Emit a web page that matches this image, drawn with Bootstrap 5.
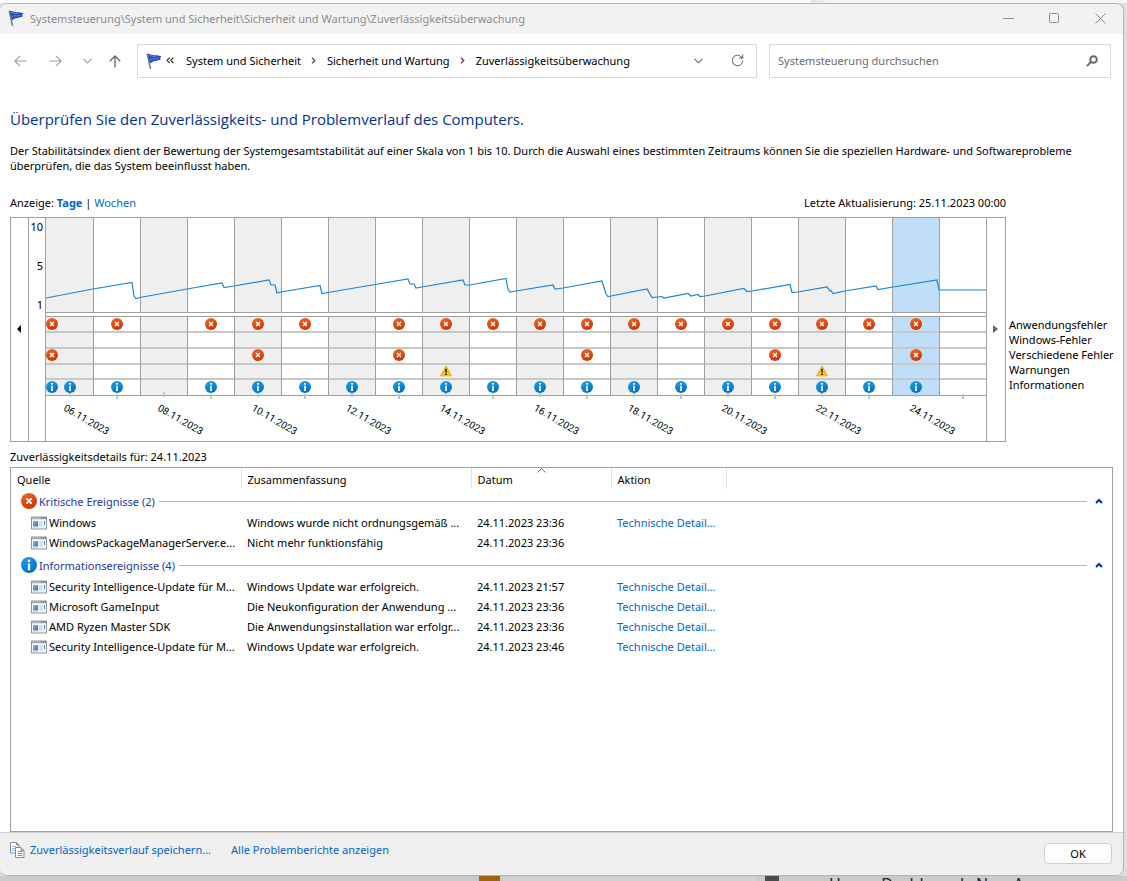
<!DOCTYPE html>
<html lang="de">
<head>
<meta charset="utf-8">
<meta name="viewport" content="width=device-width, initial-scale=1">
<title>Zuverlässigkeitsüberwachung</title>
<link href="https://cdn.jsdelivr.net/npm/bootstrap@5.3.0/dist/css/bootstrap.min.css" rel="stylesheet">
<style>
body { font-family: "Noto Sans", "Open Sans", sans-serif; font-size: 11px; line-height: 15px; color: #000; background: #dedede; }
a { color: #0066cc; text-decoration: none; }
.desk-top { height: 3px; background: linear-gradient(90deg, #fafafa 72%, #e4e4e4 72%, #f6f6f6 74%); }
.desk-bottom { height: 5px; background: #cacaca; }
.desk-bottom .thumb { width: 21px; background: #a0620c; margin-left: 479px; }
.desk-bottom .sheet { width: 254px; background: #d0d0d0; margin-left: 3px; }
.desk-bottom .pic { width: 14px; background: #4d4a42; margin-left: 8px; }
.desk-bottom .under { font-size: 16px; line-height: 16px; color: #222; margin-left: 50px; }
.win { margin-right: 3px; background: #fff; border: 1px solid #b4b4b4; border-left: 0; border-radius: 8px; }
.titlebar { height: 30px; background: #f2f2f2; color: #8c8c8c; padding: 0 0 2px 8px; }
.cap-btn { width: 46px; color: #8c8c8c; }
.plain-btn { border: 0; background: none; padding: 0; display: flex; align-items: center; justify-content: center; }
.toolbar { padding: 10px 12px 0 10px; }
.nav-btn { width: 20px; height: 34px; color: #a0a0a0; }
.nav-group { width: 127px; padding-right: 12px; }
.field { height: 34px; border: 1px solid #d9d9d9; padding-bottom: 1px; }
.address { flex: 618 1 0; }
.address ol { margin-left: 8px; }
.crumb-sep { padding: 0 11px 0 10px; }
.search { flex: 324 1 0; margin-left: 12px; color: #6d6d6d; }
.search input { border: 0; outline: 0; padding: 0; color: #6d6d6d; }
.search input::placeholder { color: #6d6d6d; opacity: 1; }
.content { padding: 31px 10px 0; }
h1 { font-family: "Open Sans", "Noto Sans", sans-serif; font-size: 15px; line-height: 20px; color: #003399; margin: 0 0 14px; font-weight: 400; }
.intro { margin: 0 0 22px; }
.chart { border: 1px solid #a0a0a0; }
.scroll-btn { width: 18px; padding: 0 2px 2px 0; }
.scroll-prev { border-right: 1px solid #a0a0a0; }
.scroll-next { border-left: 1px solid #a0a0a0; width: 19px; color: #666; }
.topline { margin-right: 107px; margin-bottom: 7px; }
.legend-col { width: 107px; padding: 100px 0 0 3px; }
.chart svg { min-width: 0; }
.chart text { font-size: 11px; }
.chart .day { font-family: Roboto, sans-serif; font-size: 10px; }
.details-title { padding-top: 7px; }
.details { border: 1px solid #a0a0a0; margin-top: 3px; }
.events { width: 100%; table-layout: fixed; white-space: nowrap; }
.events th { font-weight: 400; height: 21px; padding: 2px 6px 1px; border-right: 1px solid #e2e2e2; position: relative; }
.events th:last-child { border: 0; }
.events td { height: 20px; padding: 0 6px 1px; }
.events td:first-child { padding: 0 0 1px 20px; }
.events .group td { height: 24px; padding: 0 5px 0 10px; color: #1a3a9f; }
.events svg { display: block; flex: none; }
.cell-text { padding-left: 2px; }
.rule { height: 1px; background: #a9b7d6; }
.sort { position: absolute; top: 0; left: 50%; margin-left: -4px; }
.foot { height: 43px; background: #efefef; border-top: 1px solid #cfcfcf; border-radius: 0 0 8px 8px; padding: 0 11px 0 10px; }
.foot-links { padding-bottom: 9px; }
.foot-links svg { margin-right: 5px; }
.ok-btn { width: 68px; height: 21px; background: #fdfdfd; border: 1px solid #d0d0d0; border-radius: 4px; padding: 0; font-size: 11px; line-height: 15px; margin-bottom: 2px; }
</style>
</head>
<body class="d-flex flex-column min-vh-100">
<svg width="0" height="0" class="position-absolute" aria-hidden="true">
  <defs>
    <linearGradient id="gr" x1="0" y1="0" x2="0.4" y2="1"><stop offset="0" stop-color="#f0692e"/><stop offset="1" stop-color="#d23600"/></linearGradient>
    <linearGradient id="gb" x1="0" y1="0" x2="0.4" y2="1"><stop offset="0" stop-color="#23a0e6"/><stop offset="1" stop-color="#0074cc"/></linearGradient>
    <linearGradient id="gt" x1="0" y1="0" x2="1" y2="1"><stop offset="0" stop-color="#8ac0e4"/><stop offset="1" stop-color="#2d6fc0"/></linearGradient>
    <symbol id="err" viewBox="0 0 16 16"><circle cx="8" cy="8" r="8" fill="url(#gr)"/><path d="M5.4 5.4l5.2 5.2M10.6 5.4l-5.2 5.2" stroke="#fff" stroke-width="1.9"/></symbol>
    <symbol id="inf" viewBox="0 0 16 16"><circle cx="8" cy="8" r="8" fill="url(#gb)"/><path d="M8 2.8v2.2M8 6.4v6.8" stroke="#fff" stroke-width="2.3"/></symbol>
    <symbol id="warn" viewBox="0 0 16 16"><path d="M8 1.2L15.3 14.4H.7z" fill="#fcc40f" stroke="#e3a600" stroke-width="1" stroke-linejoin="round"/><path d="M8 5v5M8 11.2v2" stroke="#222" stroke-width="2.1"/></symbol>
    <symbol id="flag" viewBox="0 0 16 16"><path d="M1.3 1.2L4.4 15.2" stroke="#6f7f8e" stroke-width="1.6" stroke-linecap="round"/><path d="M1.8 1.4C4.5 0 6 2.8 9.2 2.2 11.3 1.9 13 2.6 15.6 3.4 14.2 4.4 14 5.6 14.6 6.8 12.6 6.6 11.6 8.2 9.4 8 7.2 7.8 6 9 4 10.4z" fill="#2848bd"/><path d="M3.2 2.6C6 2 7 4.2 10 3.6M4 6.6C7 4.8 9 7 12.6 5" stroke="#6d8ae6" stroke-width="1" fill="none"/></symbol>
    <symbol id="app" viewBox="0 0 16 14"><path d="M.5 1h15v12H.5z" fill="#f8f9fa" stroke="#8d949c"/><path d="M1 1h14v2.2H1z" fill="#a5acb4"/><path d="M10 2h1M12 2h1M14 2h1" stroke="#4d545c"/><path d="M2 5h5v5.5H2z" fill="url(#gt)"/><path d="M8 6h4M8 8h4M8 10h4M2 11.7h2M5 11.7h2" stroke="#c3c9cf"/><path d="M13.5 5v4" stroke="#4a86cc"/></symbol>
    <symbol id="up" viewBox="0 0 8 6"><path d="M1 5l3-3 3 3" fill="none" stroke="#003399" stroke-width="2"/></symbol>
  </defs>
</svg>

<div class="desk-top"></div>
<main class="win d-flex flex-column flex-grow-1 overflow-hidden">
  <header class="titlebar d-flex align-items-stretch">
    <div class="d-flex align-items-center flex-grow-1">
      <svg width="16" height="16" class="me-1"><use href="#flag"/></svg>
      <span class="cell-text">Systemsteuerung\System und Sicherheit\Sicherheit und Wartung\Zuverlässigkeitsüberwachung</span>
    </div>
    <button class="plain-btn cap-btn" aria-label="Minimieren"><svg width="11" height="11"><path d="M0 5.5h11" stroke="currentColor"/></svg></button>
    <button class="plain-btn cap-btn" aria-label="Maximieren"><svg width="11" height="11"><rect x=".5" y=".5" width="9" height="9" rx="1" fill="none" stroke="currentColor"/></svg></button>
    <button class="plain-btn cap-btn" aria-label="Schließen"><svg width="11" height="11"><path d="M.5 .5l10 10M10.5 .5l-10 10" stroke="currentColor"/></svg></button>
  </header>

  <nav class="toolbar d-flex">
    <div class="nav-group d-flex justify-content-between flex-shrink-0">
      <button class="plain-btn nav-btn" aria-label="Zurück"><svg width="13" height="12" fill="none" stroke="currentColor" stroke-width="1.2"><path d="M.8 6H12.5M6 .8L.8 6 6 11.2"/></svg></button>
      <button class="plain-btn nav-btn ms-2" aria-label="Vorwärts"><svg width="13" height="12" fill="none" stroke="currentColor" stroke-width="1.2"><path d="M.5 6h11.7M7 .8L12.2 6 7 11.2"/></svg></button>
      <button class="plain-btn nav-btn ms-1" aria-label="Verlauf"><svg width="9" height="6" fill="none" stroke="currentColor" stroke-width="1.2"><path d="M.5 .8l4 4 4-4"/></svg></button>
      <button class="plain-btn nav-btn" aria-label="Nach oben"><svg width="12" height="13" fill="none" stroke="#666" stroke-width="1.3"><path d="M6 12.5V1M.8 6.2L6 1l5.2 5.2"/></svg></button>
    </div>
    <div class="field address d-flex align-items-center">
      <svg width="16" height="16" class="ms-2 flex-shrink-0"><use href="#flag"/></svg>
      <svg width="8" height="7" class="ms-1 me-1 flex-shrink-0" fill="none" stroke="#333" stroke-width="1.2"><path d="M3.7 .6L1 3.3 3.7 6M7.4 .6L4.7 3.3 7.4 6"/></svg>
      <ol class="list-unstyled d-flex align-items-center mb-0 ms-1 ps-1 flex-grow-1 text-nowrap">
        <li>System und Sicherheit</li>
        <li aria-hidden="true" class="crumb-sep"><svg width="5" height="7" class="d-block" fill="none" stroke="#444" stroke-width="1.3"><path d="M1 .6l2.8 2.9L1 6.4"/></svg></li>
        <li>Sicherheit und Wartung</li>
        <li aria-hidden="true" class="crumb-sep"><svg width="5" height="7" class="d-block" fill="none" stroke="#444" stroke-width="1.3"><path d="M1 .6l2.8 2.9L1 6.4"/></svg></li>
        <li>Zuverlässigkeitsüberwachung</li>
      </ol>
      <button class="plain-btn me-4" aria-label="Vorherige Orte"><svg width="9" height="6" class="me-1" fill="none" stroke="#666" stroke-width="1.1"><path d="M.5 .8l4 4 4-4"/></svg></button>
      <button class="plain-btn me-1 pe-2" aria-label="Aktualisieren"><svg width="13" height="13" fill="none" stroke="#777" stroke-width="1.1"><path d="M11.7 6.5a5.2 5.2 0 1 1-1.7-3.9l1.5 1.4M11.7 .6v3.5H8.2"/></svg></button>
    </div>
    <div class="field search d-flex align-items-center px-2">
      <input type="search" class="flex-grow-1 w-100" placeholder="Systemsteuerung durchsuchen" aria-label="Systemsteuerung durchsuchen">
      <svg width="12" height="12" class="me-1 flex-shrink-0" fill="none" stroke="#666"><circle cx="7.5" cy="4.5" r="3.3" stroke-width="1.9"/><path d="M5 7L.8 11.2" stroke-width="1.8"/></svg>
    </div>
  </nav>

  <section class="content d-flex flex-column flex-grow-1">
    <h1>Überprüfen Sie den Zuverlässigkeits- und Problemverlauf des Computers.</h1>
    <p class="intro">Der Stabilitätsindex dient der Bewertung der Systemgesamtstabilität auf einer Skala von 1 bis 10. Durch die Auswahl eines bestimmten Zeitraums können Sie die speziellen Hardware- und Softwareprobleme überprüfen, die das System beeinflusst haben.</p>

    <div class="topline d-flex justify-content-between">
      <div>Anzeige: <a href="#" class="fw-bold">Tage</a> | <a href="#">Wochen</a></div>
      <div>Letzte Aktualisierung: 25.11.2023 00:00</div>
    </div>

    <div class="d-flex">
      <div class="chart d-flex flex-grow-1">
        <button class="plain-btn scroll-btn scroll-prev flex-shrink-0" aria-label="Zurückblättern"><svg width="4" height="8"><path d="M4 0v8L0 4z"/></svg></button>
        <svg id="plot" class="d-block flex-grow-1" viewBox="29 218 957 223" role="img" aria-label="Stabilitätsdiagramm"></svg>
        <button class="plain-btn scroll-btn scroll-next flex-shrink-0" aria-label="Vorblättern"><svg width="5" height="8"><path d="M0 0v8l5-4z" fill="currentColor"/></svg></button>
      </div>
      <div class="legend-col flex-shrink-0 text-nowrap">
        <div>Anwendungsfehler</div><div>Windows-Fehler</div><div>Verschiedene Fehler</div><div>Warnungen</div><div>Informationen</div>
      </div>
    </div>

    <div class="details-title">Zuverlässigkeitsdetails für: 24.11.2023</div>
    <div class="details flex-grow-1">
      <table class="events">
        <colgroup><col style="width:230px"><col style="width:230px"><col style="width:140px"><col style="width:115px"><col></colgroup>
        <thead><tr><th>Quelle</th><th>Zusammenfassung</th><th>Datum<svg class="sort" width="9" height="5"><path d="M.5 4.5l4-4 4 4" fill="none" stroke="#666"/></svg></th><th>Aktion</th><th></th></tr></thead>
        <tbody id="rows"></tbody>
      </table>
    </div>
  </section>

  <footer class="foot d-flex align-items-center">
    <div class="foot-links d-flex align-items-center">
      <svg width="15" height="16" fill="#fff" stroke="#8a8a8a"><path d="M.5 .5h6l2.5 2.5v8h-8.5z"/><path d="M6.5 .5v2.5h2.5" fill="none"/><path d="M2 4.5h4M2 6.5h3M2 8.5h3" stroke="#9cc3ee"/><path d="M5.5 5.5h5.500l3 3v7h-8.5z"/><path d="M11 5.5v3h3" fill="none"/><path d="M7.5 9.5h5M7.5 11.5h5M7.5 13.5h5" stroke="#5a9fe6"/></svg>
      <a href="#" class="pe-3">Zuverlässigkeitsverlauf speichern...</a>
      <a href="#" class="ms-1">Alle Problemberichte anzeigen</a>
    </div>
    <button class="ok-btn ms-auto">OK</button>
  </footer>
</main>
<div class="desk-bottom d-flex overflow-hidden text-nowrap"><span class="thumb"></span><span class="sheet"></span><span class="pic"></span><span class="under" aria-hidden="true">House Dashboards New A</span></div>

<script src="https://cdn.jsdelivr.net/npm/bootstrap@5.3.0/dist/js/bootstrap.bundle.min.js"></script>
<script>
// Stability chart: 20 day columns, 47 units each
const left = 46, step = 47, days = 20, selected = 18;
const range = (a, b) => Array.from({length: b - a + 1}, (_, i) => a + i);
const mid = k => left + 24 + k * step;
const early = 52; // events carried over from the previous page
const line = '46,298 93,289 132,282.5 134,296 136,298.5 140,297.5 187,289 222,283 224,287.5 234,286 269,280 271,285 275,285 277,293 281,292 320,285.5 322,293.5 328,292.5 375,284.5 408,279 410,284 414,284 416,288 422,287 463,280 465,285 470,285 506,278.5 508,289 510,292 516,291 553,285 555,289 563,288 602,281 606,294 608,296.5 611,296 647,289 652,297.5 662,296.5 664,298 688,293.5 691,296 698,294.5 700,296.5 705,296 744,288.5 747,291.5 752,291 790,284.5 792,292.5 798,292 827,287 830,291 831,290.5 833,293.5 845,291 876,286 878,289.5 893,287 937,280 939,290 986,290';
let s = '';
for (let k = 0; k < days; k++) {
  const x = left + k * step;
  const fill = k === selected ? '#c0def7' : k % 2 ? '' : '#efefef';
  if (fill) s += `<rect x="${x}" y="218" width="47" height="94" fill="${fill}"/><rect x="${x}" y="317" width="47" height="78" fill="${fill}"/>`;
}
for (const y of [332, 348, 364, 379]) s += `<path d="M46 ${y}H986" stroke="#c8c8c8" stroke-width="2"/>`;
for (let k = 1; k < days; k++) s += `<path d="M${left + k * step + .5} 218V312M${left + k * step + .5} 317V395" stroke="#a0a0a0"/>`;
s += '<path d="M45.5 218V441M46 312.5H986M46 316.5H986M46 395.5H986" stroke="#a0a0a0"/>';
s += `<polyline points="${line}" fill="none" stroke="#1a86dc" stroke-width="1.2"/>`;
for (let k = 0; k < days; k++) s += `<path d="M${mid(k)} ${k % 2 ? 394 : 392}v5" stroke="#c4c4c4" stroke-width="2"/>`;
const mark = (id, x, y) => `<use href="#${id}" x="${x - 6}" y="${y - 6}" width="12" height="12"/>`;
[early, ...[1, 3, 4, 5, ...range(7, 18)].map(mid)].forEach(x => s += mark('err', x, 324));
[early, ...[4, 7, 11, 15, 18].map(mid)].forEach(x => s += mark('err', x, 355));
[8, 16].map(mid).forEach(x => s += mark('warn', x, 371));
[early, ...[0, 1, ...range(3, 18)].map(mid)].forEach(x => s += mark('inf', x, 387));
for (let k = 0; k < days; k += 2)
  s += `<text class="day" transform="translate(${mid(k) - 7} 410) rotate(30)">${String(6 + k).padStart(2, '0')}.11.2023</text>`;
[['10', 231], ['5', 270], ['1', 309]].forEach(([t, y]) => s += `<text x="43" y="${y}" text-anchor="end">${t}</text>`);
document.getElementById('plot').innerHTML = s;

// Event list
const groups = [
  ['err', 'Kritische Ereignisse (2)', [
    ['Windows', 'Windows wurde nicht ordnungsgemäß ...', '24.11.2023 23:36', 1],
    ['WindowsPackageManagerServer.e...', 'Nicht mehr funktionsfähig', '24.11.2023 23:36', 0]]],
  ['inf', 'Informationsereignisse (4)', [
    ['Security Intelligence-Update für M...', 'Windows Update war erfolgreich.', '24.11.2023 21:57', 1],
    ['Microsoft GameInput', 'Die Neukonfiguration der Anwendung ...', '24.11.2023 23:36', 1],
    ['AMD Ryzen Master SDK', 'Die Anwendungsinstallation war erfolgr...', '24.11.2023 23:36', 1],
    ['Security Intelligence-Update für M...', 'Windows Update war erfolgreich.', '24.11.2023 23:46', 1]]]];
document.getElementById('rows').innerHTML = groups.map(([icon, name, items]) =>
  `<tr class="group"><td colspan="5"><div class="d-flex align-items-center"><svg width="16" height="16"><use href="#${icon}"/></svg><span class="cell-text">${name}</span><span class="rule flex-grow-1 ms-1 me-2"></span><button class="plain-btn me-1" aria-label="Gruppe reduzieren"><svg width="8" height="6"><use href="#up"/></svg></button></div></td></tr>` +
  items.map(([src, sum, date, link]) =>
    `<tr><td><div class="d-flex align-items-center"><svg width="16" height="14"><use href="#app"/></svg><span class="cell-text">${src}</span></div></td><td>${sum}</td><td>${date}</td><td>${link ? '<a href="#">Technische Detail...</a>' : ''}</td><td></td></tr>`).join('')).join('');
</script>
</body>
</html>
